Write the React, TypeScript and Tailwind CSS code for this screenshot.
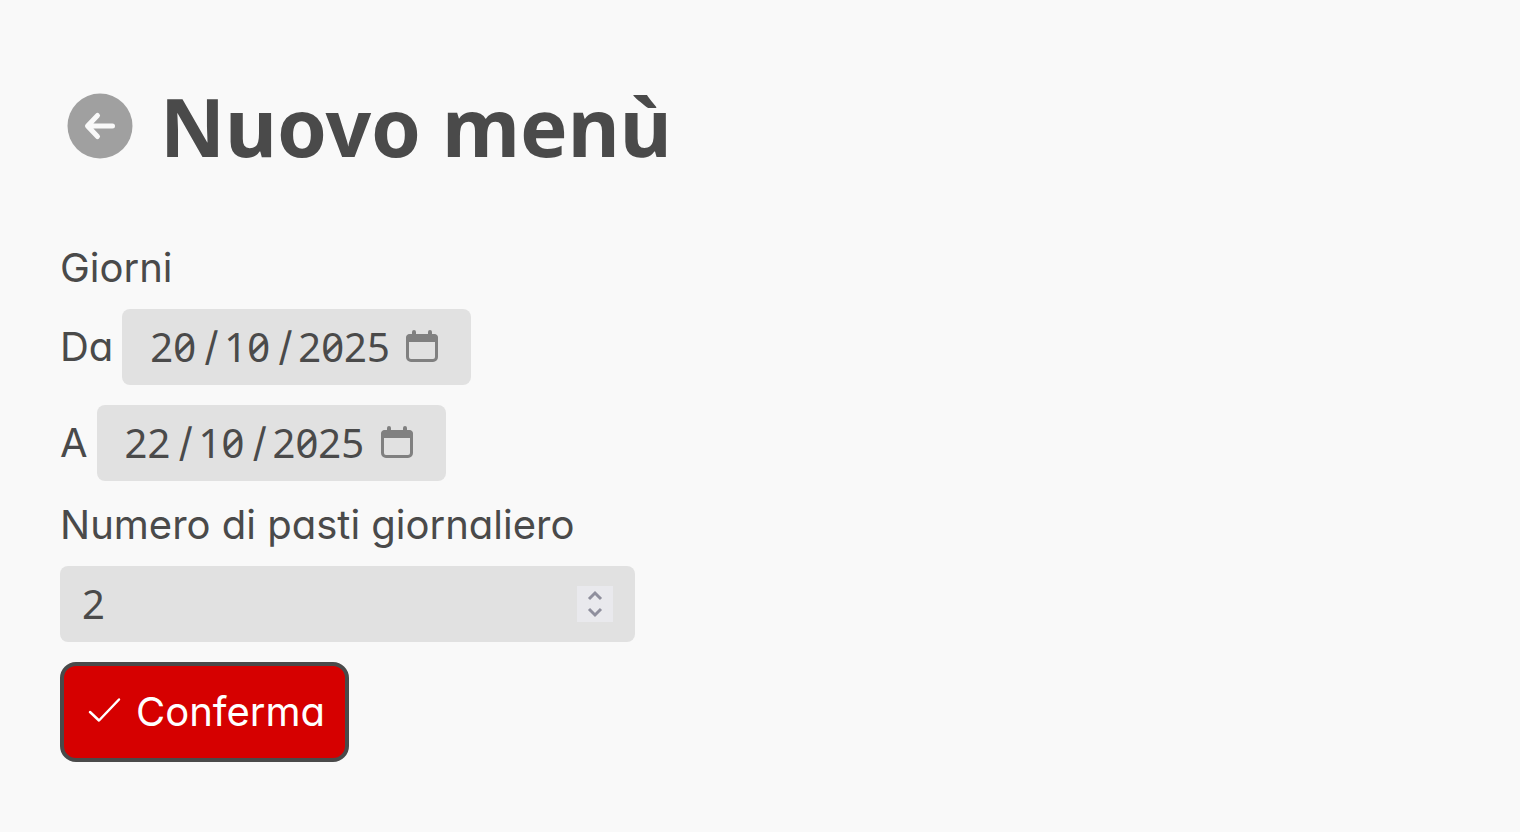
import { useState } from "react";

function CalendarIcon() {
  return (
    <svg width="32" height="34" viewBox="0 0 32 34" fill="none" aria-hidden="true">
      <path d="M8 2v6M24 2v6" stroke="#808080" strokeWidth="4" strokeLinecap="round" />
      <rect x="1.5" y="5.5" width="29" height="25" rx="3.5" stroke="#808080" strokeWidth="3" />
      <path d="M0 12V8a4 4 0 0 1 4-4h24a4 4 0 0 1 4 4v4z" fill="#808080" />
    </svg>
  );
}

type DateFieldProps = { id: string; label: string; day: string; month: string; year: string };

const segment = "bg-transparent p-0 outline-none";
const separator = "w-[26px] text-center font-['Inter',sans-serif]";

function DateField({ id, label, day, month, year }: DateFieldProps) {
  return (
    <div className="flex items-center gap-[9px]">
      <label htmlFor={id}>{label}</label>
      <div
        role="group"
        aria-label={label}
        className="flex h-19 items-center rounded-lg bg-[#e1e1e1] pr-[33px] pl-7 font-['Noto_Sans',sans-serif] slashed-zero"
      >
        <input id={id} defaultValue={day} inputMode="numeric" maxLength={2} className={`w-12 ${segment}`} />
        <span className={separator}>/</span>
        <input aria-label="Mese" defaultValue={month} inputMode="numeric" maxLength={2} className={`w-12 ${segment}`} />
        <span className={separator}>/</span>
        <input aria-label="Anno" defaultValue={year} inputMode="numeric" maxLength={4} className={`w-24 ${segment}`} />
        <button type="button" aria-label="Apri calendario" className="ml-3">
          <CalendarIcon />
        </button>
      </div>
    </div>
  );
}

export default function App() {
  const [meals, setMeals] = useState(2);
  return (
    <main className="min-h-screen bg-[#f9f9f9] px-[60px] pt-[78px] pb-16 font-['Inter','Noto_Sans',sans-serif] text-[40px] leading-[60px] text-[#4a4a4a] [font-feature-settings:'cv11']">
      <header className="flex items-center gap-5">
        <a href="#indietro" aria-label="Indietro" className="p-[7px]">
          <svg width="66" height="66" viewBox="0 0 66 66" fill="none" aria-hidden="true">
            <circle cx="33" cy="33" r="32.5" fill="#a0a0a0" />
            <path d="M45.500 33H21M30.500 22.500 20.500 33l10 10.500" stroke="#f9f9f9" strokeWidth="5" strokeLinecap="round" strokeLinejoin="round" />
          </svg>
        </a>
        <h1 className="font-['Noto_Sans',sans-serif] text-[80px] leading-[96px] font-bold">Nuovo menù</h1>
      </header>
      <form className="mt-16 flex flex-col items-start" onSubmit={(e) => e.preventDefault()}>
        <fieldset className="flex flex-col gap-5">
          <legend className="mb-[11px]">Giorni</legend>
          <DateField id="da" label="Da" day="20" month="10" year="2025" />
          <DateField id="a" label="A" day="22" month="10" year="2025" />
        </fieldset>
        <label htmlFor="pasti" className="mt-[14px] mb-[11px]">Numero di pasti giornaliero</label>
        <div className="flex h-19 w-full max-w-[575px] items-center rounded-lg bg-[#e1e1e1] px-[22px]">
          <input
            id="pasti"
            inputMode="numeric"
            value={meals}
            onChange={(e) => setMeals(Number(e.target.value) || 0)}
            className="min-w-0 flex-1 bg-transparent p-0 font-['Noto_Sans',sans-serif] outline-none"
          />
          <div className="flex h-9 w-9 flex-col bg-[#e9e9ed]">
            <button type="button" aria-label="Aumenta" onClick={() => setMeals(meals + 1)} className="flex flex-1 items-center justify-center">
              <svg width="16" height="18" viewBox="0 0 16 18" fill="none" aria-hidden="true">
                <path d="M2 13l6-6 6 6" stroke="#8f8f9d" strokeWidth="3" />
              </svg>
            </button>
            <button type="button" aria-label="Diminuisci" onClick={() => setMeals(Math.max(0, meals - 1))} className="flex flex-1 items-center justify-center">
              <svg width="16" height="18" viewBox="0 0 16 18" fill="none" aria-hidden="true">
                <path d="M2 5l6 6 6-6" stroke="#8f8f9d" strokeWidth="3" />
              </svg>
            </button>
          </div>
        </div>
        <button type="submit" className="mt-5 flex h-[100px] items-center gap-[14px] rounded-2xl border-4 border-[#4a4a4a] bg-[#d60000] pr-5 pl-[22px] text-white">
          <svg width="36" height="36" viewBox="0 0 36 36" fill="none" aria-hidden="true">
            <path d="M4 18 13 26.500 33 5.500" stroke="currentColor" strokeWidth="2.500" strokeLinecap="round" strokeLinejoin="round" />
          </svg>
          Conferma
        </button>
      </form>
    </main>
  );
}
